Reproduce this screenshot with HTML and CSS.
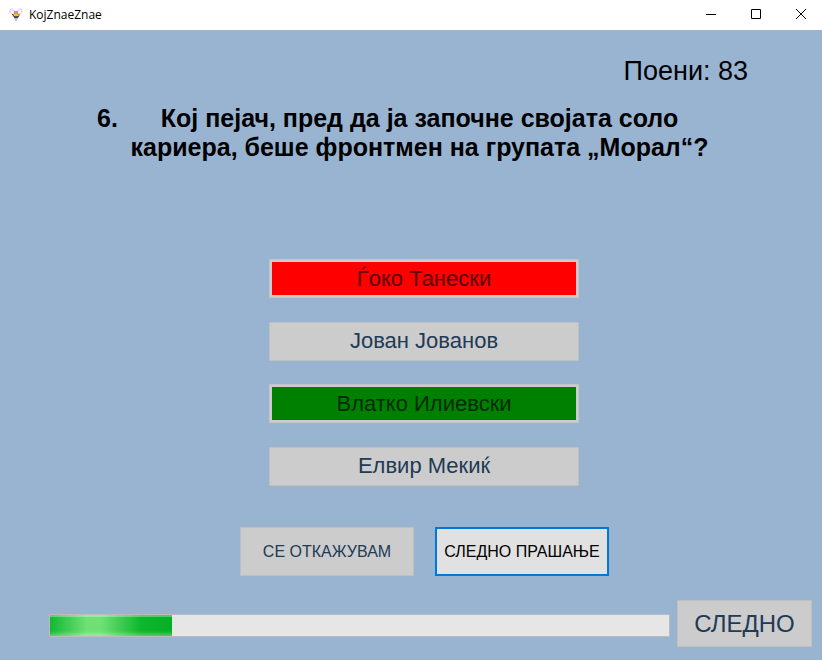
FILE: index.html
```html
<!DOCTYPE html>
<html lang="mk">
<head>
<meta charset="utf-8">
<title>KojZnaeZnae</title>
<link rel="stylesheet" href="styles.css">
</head>
<body>
<header class="titlebar">
  <svg class="app-icon" viewBox="0 0 16 16" aria-hidden="true">
    <path d="M7 6C6 1 2 1 2 4s3 3 5 3M9 6c1-5 5-5 5-2s-3 3-5 3" fill="#f8f2fa" stroke="#d8c8de"/>
    <path d="M6 4h4v3H6z" fill="#b497aa"/>
    <path d="M4 7h8l-1 3H5z" fill="#c9852c"/>
    <path d="M6 7h4v2H6z" fill="#f5c518"/>
    <path d="M4 7l2 2" stroke="#9b3c2c"/>
    <path d="M6 9h5l-1 2H6z" fill="#4a4a5c"/>
    <path d="M6 11h4l-2 4z" fill="#a9bccb"/>
  </svg>
  <span class="app-name">KojZnaeZnae</span>
  <button class="window-button" aria-label="Minimize"><svg viewBox="0 0 12 12"><path d="M1 5.500h10"/></svg></button>
  <button class="window-button" aria-label="Maximize"><svg viewBox="0 0 12 12"><path d="M1.500 .5h9v9h-9z"/></svg></button>
  <button class="window-button" aria-label="Close"><svg viewBox="0 0 12 12"><path d="M1 0l10 10M11 0L1 10"/></svg></button>
</header>
<main class="game">
  <p class="score">Поени: 83</p>
  <div class="question">
    <span class="number">6.</span>
    <h1 class="question-text">Кој пејач, пред да ја започне својата соло<br>кариера, беше фронтмен на групата „Морал“?</h1>
  </div>
  <div class="answers">
    <button class="button answer wrong" disabled>Ѓоко Танески</button>
    <button class="button answer" disabled>Јован Јованов</button>
    <button class="button answer correct" disabled>Влатко Илиевски</button>
    <button class="button answer" disabled>Елвир Мекиќ</button>
  </div>
  <div class="actions">
    <button class="button action" disabled>СЕ ОТКАЖУВАМ</button>
    <button class="button action focused">СЛЕДНО ПРАШАЊЕ</button>
  </div>
  <footer class="bottom">
    <div class="progress" role="progressbar" aria-label="Напредок" aria-valuenow="20" aria-valuemin="0" aria-valuemax="100"><div class="progress-fill" style="width: 19.7%"></div></div>
    <button class="button next" disabled>СЛЕДНО</button>
  </footer>
</main>
</body>
</html>
```
FILE: styles.css
```css
* { box-sizing: border-box; }

body {
  margin: 0;
  min-height: 100vh;
  display: flex;
  flex-direction: column;
  overflow-x: hidden;
  background: #99b4d1;
  color: #000;
  font-family: "Liberation Sans", Arial, sans-serif;
}

.titlebar {
  display: flex;
  align-items: center;
  height: 30px;
  margin-right: -1px;
  padding-left: 8px;
  background: #fff;
}

.app-icon { width: 16px; height: 16px; }

.app-name {
  flex: 1;
  margin-left: 5px;
  font: 12px/16px "Open Sans", sans-serif;
}

.window-button {
  display: grid;
  place-items: center;
  width: 45px;
  height: 28px;
  padding: 0;
  border: 0;
  background: none;
}

.window-button svg {
  width: 12px;
  height: 12px;
  fill: none;
  stroke: #000;
}

.game {
  flex: 1;
  display: flex;
  flex-direction: column;
}

.score {
  margin: 25px 74px 0 0;
  text-align: right;
  font-size: 27px;
  line-height: 32px;
}

.question {
  display: grid;
  grid-template-columns: 32px 1fr 32px;
  margin: 17px 80px 0 97px;
  font-size: 25px;
  font-weight: bold;
  line-height: 29px;
}

.question-text {
  margin: 0;
  font-size: inherit;
  text-align: center;
  white-space: nowrap;
}

.answers {
  display: flex;
  flex-direction: column;
  align-items: center;
  justify-content: space-between;
  height: 227px;
  margin: 97px 0 0 26px;
}

.button {
  padding: 0;
  border: 1px solid #bfbfbf;
  background: #ccc;
  color: #213a56;
  font-family: inherit;
}

.answer {
  width: 310px;
  height: 39px;
  font-size: 22px;
}

.wrong,
.correct {
  border-color: #c4c4c4;
  box-shadow: inset 0 0 0 2px #ccc;
}

.wrong { background: #f00; color: #560000; }
.correct { background: #008000; color: #002b00; }

.actions {
  display: flex;
  justify-content: center;
  gap: 21px;
  margin: 41px 0 0 27px;
}

.action {
  width: 174px;
  height: 49px;
  font-size: 16px;
  white-space: nowrap;
}

.focused {
  border: 2px solid #0078d7;
  background: #e1e1e1;
  color: #000;
}

.bottom {
  display: flex;
  align-items: center;
  gap: 7px;
  margin-top: auto;
  padding: 0 10px 13px 49px;
}

.progress {
  flex: 1;
  height: 23px;
  margin-top: 3px;
  border: 1px solid #bcbcbc;
  background: #e6e6e6;
}

.progress-fill {
  height: 100%;
  background:
    linear-gradient(rgba(255, 255, 255, .3) 2px, transparent 2px 16px, rgba(255, 255, 255, .3)),
    linear-gradient(90deg, #12b832, #6ee076 30%, #6ee076 42%, #0db62c 75%, #06b025);
}

.next {
  width: 135px;
  height: 47px;
  font-size: 24px;
}
```
